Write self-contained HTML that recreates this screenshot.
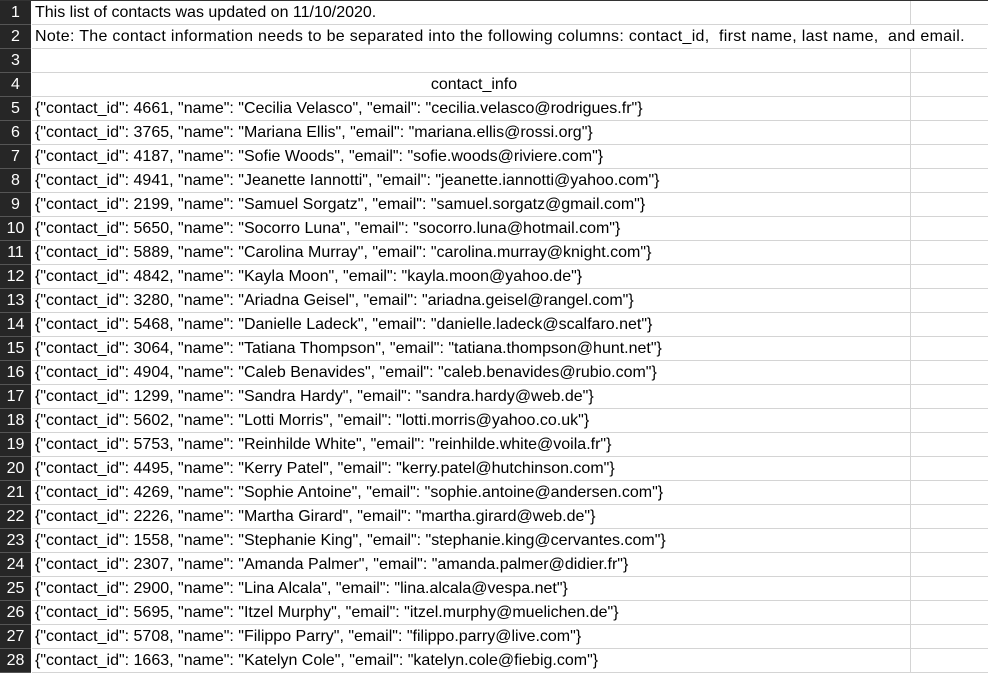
<!DOCTYPE html>
<html><head><meta charset="utf-8"><style>
body{margin:0;width:988px;height:672px;overflow:hidden;background:#fff;font-family:"Liberation Sans",Calibri,sans-serif;font-size:16px;color:#000;position:relative}
.top{position:absolute;left:0;top:0;width:988px;height:1px;background:#333}
.r{position:absolute;left:0;width:988px;height:24px}
.h{position:absolute;left:0;top:0;width:31px;height:23px;background:#262626;color:#fff;text-align:center;line-height:24px;font-size:16px}
.c{position:absolute;left:32px;top:0;width:878px;height:23px;border-bottom:1px solid #d4d4d4;line-height:24px;padding-left:3px;box-sizing:content-box;white-space:nowrap}
.d{position:absolute;left:910px;top:0;width:78px;height:23px;border-left:1px solid #d4d4d4;border-bottom:1px solid #d4d4d4}
.hb{position:absolute;left:0;width:31px;height:1px;background:#555}
</style></head><body>
<div class="top"></div>
<div id="g"></div>
<script>
var rows=["This list of contacts was updated on 11/10/2020.","<span style='letter-spacing:0.3px'>Note: The contact information needs to be separated into the following columns: contact_id,&nbsp; first name, last name,&nbsp; and email.</span>","","<center>contact_info</center>",
'{"contact_id": 4661, "name": "Cecilia Velasco", "email": "cecilia.velasco@rodrigues.fr"}',
'{"contact_id": 3765, "name": "Mariana Ellis", "email": "mariana.ellis@rossi.org"}',
'{"contact_id": 4187, "name": "Sofie Woods", "email": "sofie.woods@riviere.com"}',
'{"contact_id": 4941, "name": "Jeanette Iannotti", "email": "jeanette.iannotti@yahoo.com"}',
'{"contact_id": 2199, "name": "Samuel Sorgatz", "email": "samuel.sorgatz@gmail.com"}',
'{"contact_id": 5650, "name": "Socorro Luna", "email": "socorro.luna@hotmail.com"}',
'{"contact_id": 5889, "name": "Carolina Murray", "email": "carolina.murray@knight.com"}',
'{"contact_id": 4842, "name": "Kayla Moon", "email": "kayla.moon@yahoo.de"}',
'{"contact_id": 3280, "name": "Ariadna Geisel", "email": "ariadna.geisel@rangel.com"}',
'{"contact_id": 5468, "name": "Danielle Ladeck", "email": "danielle.ladeck@scalfaro.net"}',
'{"contact_id": 3064, "name": "Tatiana Thompson", "email": "tatiana.thompson@hunt.net"}',
'{"contact_id": 4904, "name": "Caleb Benavides", "email": "caleb.benavides@rubio.com"}',
'{"contact_id": 1299, "name": "Sandra Hardy", "email": "sandra.hardy@web.de"}',
'{"contact_id": 5602, "name": "Lotti Morris", "email": "lotti.morris@yahoo.co.uk"}',
'{"contact_id": 5753, "name": "Reinhilde White", "email": "reinhilde.white@voila.fr"}',
'{"contact_id": 4495, "name": "Kerry Patel", "email": "kerry.patel@hutchinson.com"}',
'{"contact_id": 4269, "name": "Sophie Antoine", "email": "sophie.antoine@andersen.com"}',
'{"contact_id": 2226, "name": "Martha Girard", "email": "martha.girard@web.de"}',
'{"contact_id": 1558, "name": "Stephanie King", "email": "stephanie.king@cervantes.com"}',
'{"contact_id": 2307, "name": "Amanda Palmer", "email": "amanda.palmer@didier.fr"}',
'{"contact_id": 2900, "name": "Lina Alcala", "email": "lina.alcala@vespa.net"}',
'{"contact_id": 5695, "name": "Itzel Murphy", "email": "itzel.murphy@muelichen.de"}',
'{"contact_id": 5708, "name": "Filippo Parry", "email": "filippo.parry@live.com"}',
'{"contact_id": 1663, "name": "Katelyn Cole", "email": "katelyn.cole@fiebig.com"}'];
var h="";
for(var i=0;i<rows.length;i++){var t=1+24*i;var wide=i==1;
h+='<div class="r" style="top:'+t+'px"><div class="h">'+(i+1)+'</div>'+(wide?'<div class="c" style="width:952px">':'<div class="c">')+rows[i]+'</div>'+(wide?'':'<div class="d"></div>')+'</div><div class="hb" style="top:'+(t+23)+'px"></div>';}
document.getElementById("g").innerHTML=h;
</script>
</body></html>
